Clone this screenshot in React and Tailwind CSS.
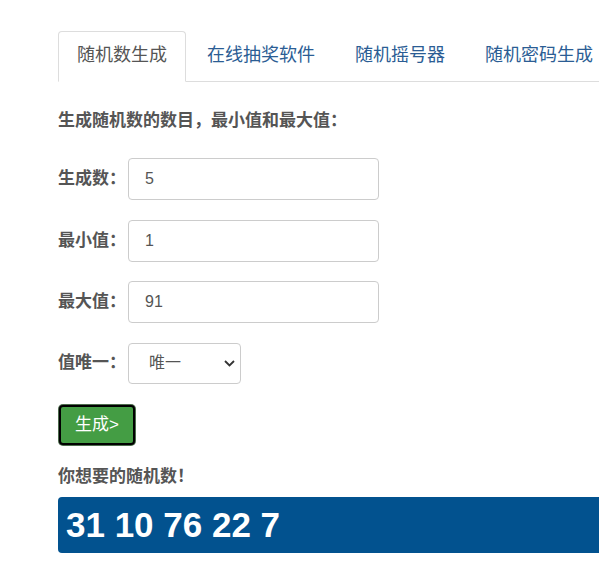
import React, { useState } from 'react';

const CJK = { fontFamily: '"Liberation Sans", "Noto Sans CJK SC", sans-serif' };

const tabs = ['随机数生成', '在线抽奖软件', '随机摇号器', '随机密码生成'];

const Field = ({ label, value }) => (
  <div className="flex items-center">
    <label className="w-[70px] text-[17px] font-bold text-[#555] leading-[24px]">{label}</label>
    <input
      type="text"
      defaultValue={value}
      className="w-[251px] h-[42px] border border-[#ccc] rounded-[4px] px-[16px] text-[16px] text-[#555] bg-white outline-none"
      style={CJK}
    />
  </div>
);

const App = () => {
  const [active, setActive] = useState(0);
  const result = [31, 10, 76, 22, 7];

  return (
    <div className="w-[599px] h-[561px] overflow-hidden bg-white" style={CJK}>
      <div className="w-[760px] pl-[58px]">
        {/* Tabs */}
        <ul className="mt-[31px] flex border-b border-[#ddd]">
          {tabs.map((t, i) => (
            <li key={i} className="-mb-px mr-[2px]">
              <button
                onClick={() => setActive(i)}
                className={`px-[18px] pt-[11px] pb-[13px] text-[18px] leading-[25px] border rounded-t-[4px] ${
                  i === active
                    ? 'border-[#ddd] border-b-transparent bg-white text-[#555]'
                    : 'border-transparent text-[#2b5d94]'
                }`}
              >
                {t}
              </button>
            </li>
          ))}
        </ul>

        <h4 className="mt-[27px] text-[17px] font-bold leading-[24px] text-[#555]">
          生成随机数的数目，最小值和最大值：
        </h4>

        <div className="mt-[25px] flex flex-col gap-[19.5px]">
          <Field label="生成数：" value="5" />
          <Field label="最小值：" value="1" />
          <Field label="最大值：" value="91" />
          <div className="flex items-center">
            <label className="w-[70px] text-[17px] font-bold text-[#555] leading-[24px]">值唯一：</label>
            <div className="relative">
              <select
                className="appearance-none w-[113px] h-[41px] border border-[#ccc] rounded-[4px] pl-[20px] text-[16px] text-[#555] bg-white outline-none"
                style={CJK}
                defaultValue="1"
              >
                <option value="1">唯一</option>
                <option value="0">不唯一</option>
              </select>
              <svg
                className="absolute right-[6px] top-[17px] pointer-events-none"
                width="11"
                height="7"
                viewBox="0 0 11 7"
                fill="none"
              >
                <path d="M1 1l4.5 4.5L10 1" stroke="#333" strokeWidth="1.8" />
              </svg>
            </div>
          </div>
        </div>

        <button className="mt-[21px] ml-px flex items-center justify-center w-[76px] h-[40px] border-2 border-black rounded-[4px] bg-[#449d44] text-white text-[17px] shadow-[0_0_0_1px_#4d6b4d]">
          生成&gt;
        </button>

        <h4 className="mt-[20px] text-[17px] font-bold leading-[24px] text-[#555]">你想要的随机数！</h4>

        <div className="mt-[8px] h-[56px] rounded-[4px] bg-[#02528f] px-[8px] flex items-center">
          <span className="text-white font-bold text-[35px] leading-none">{result.join(' ')}</span>
        </div>
      </div>
    </div>
  );
};

export default App;
